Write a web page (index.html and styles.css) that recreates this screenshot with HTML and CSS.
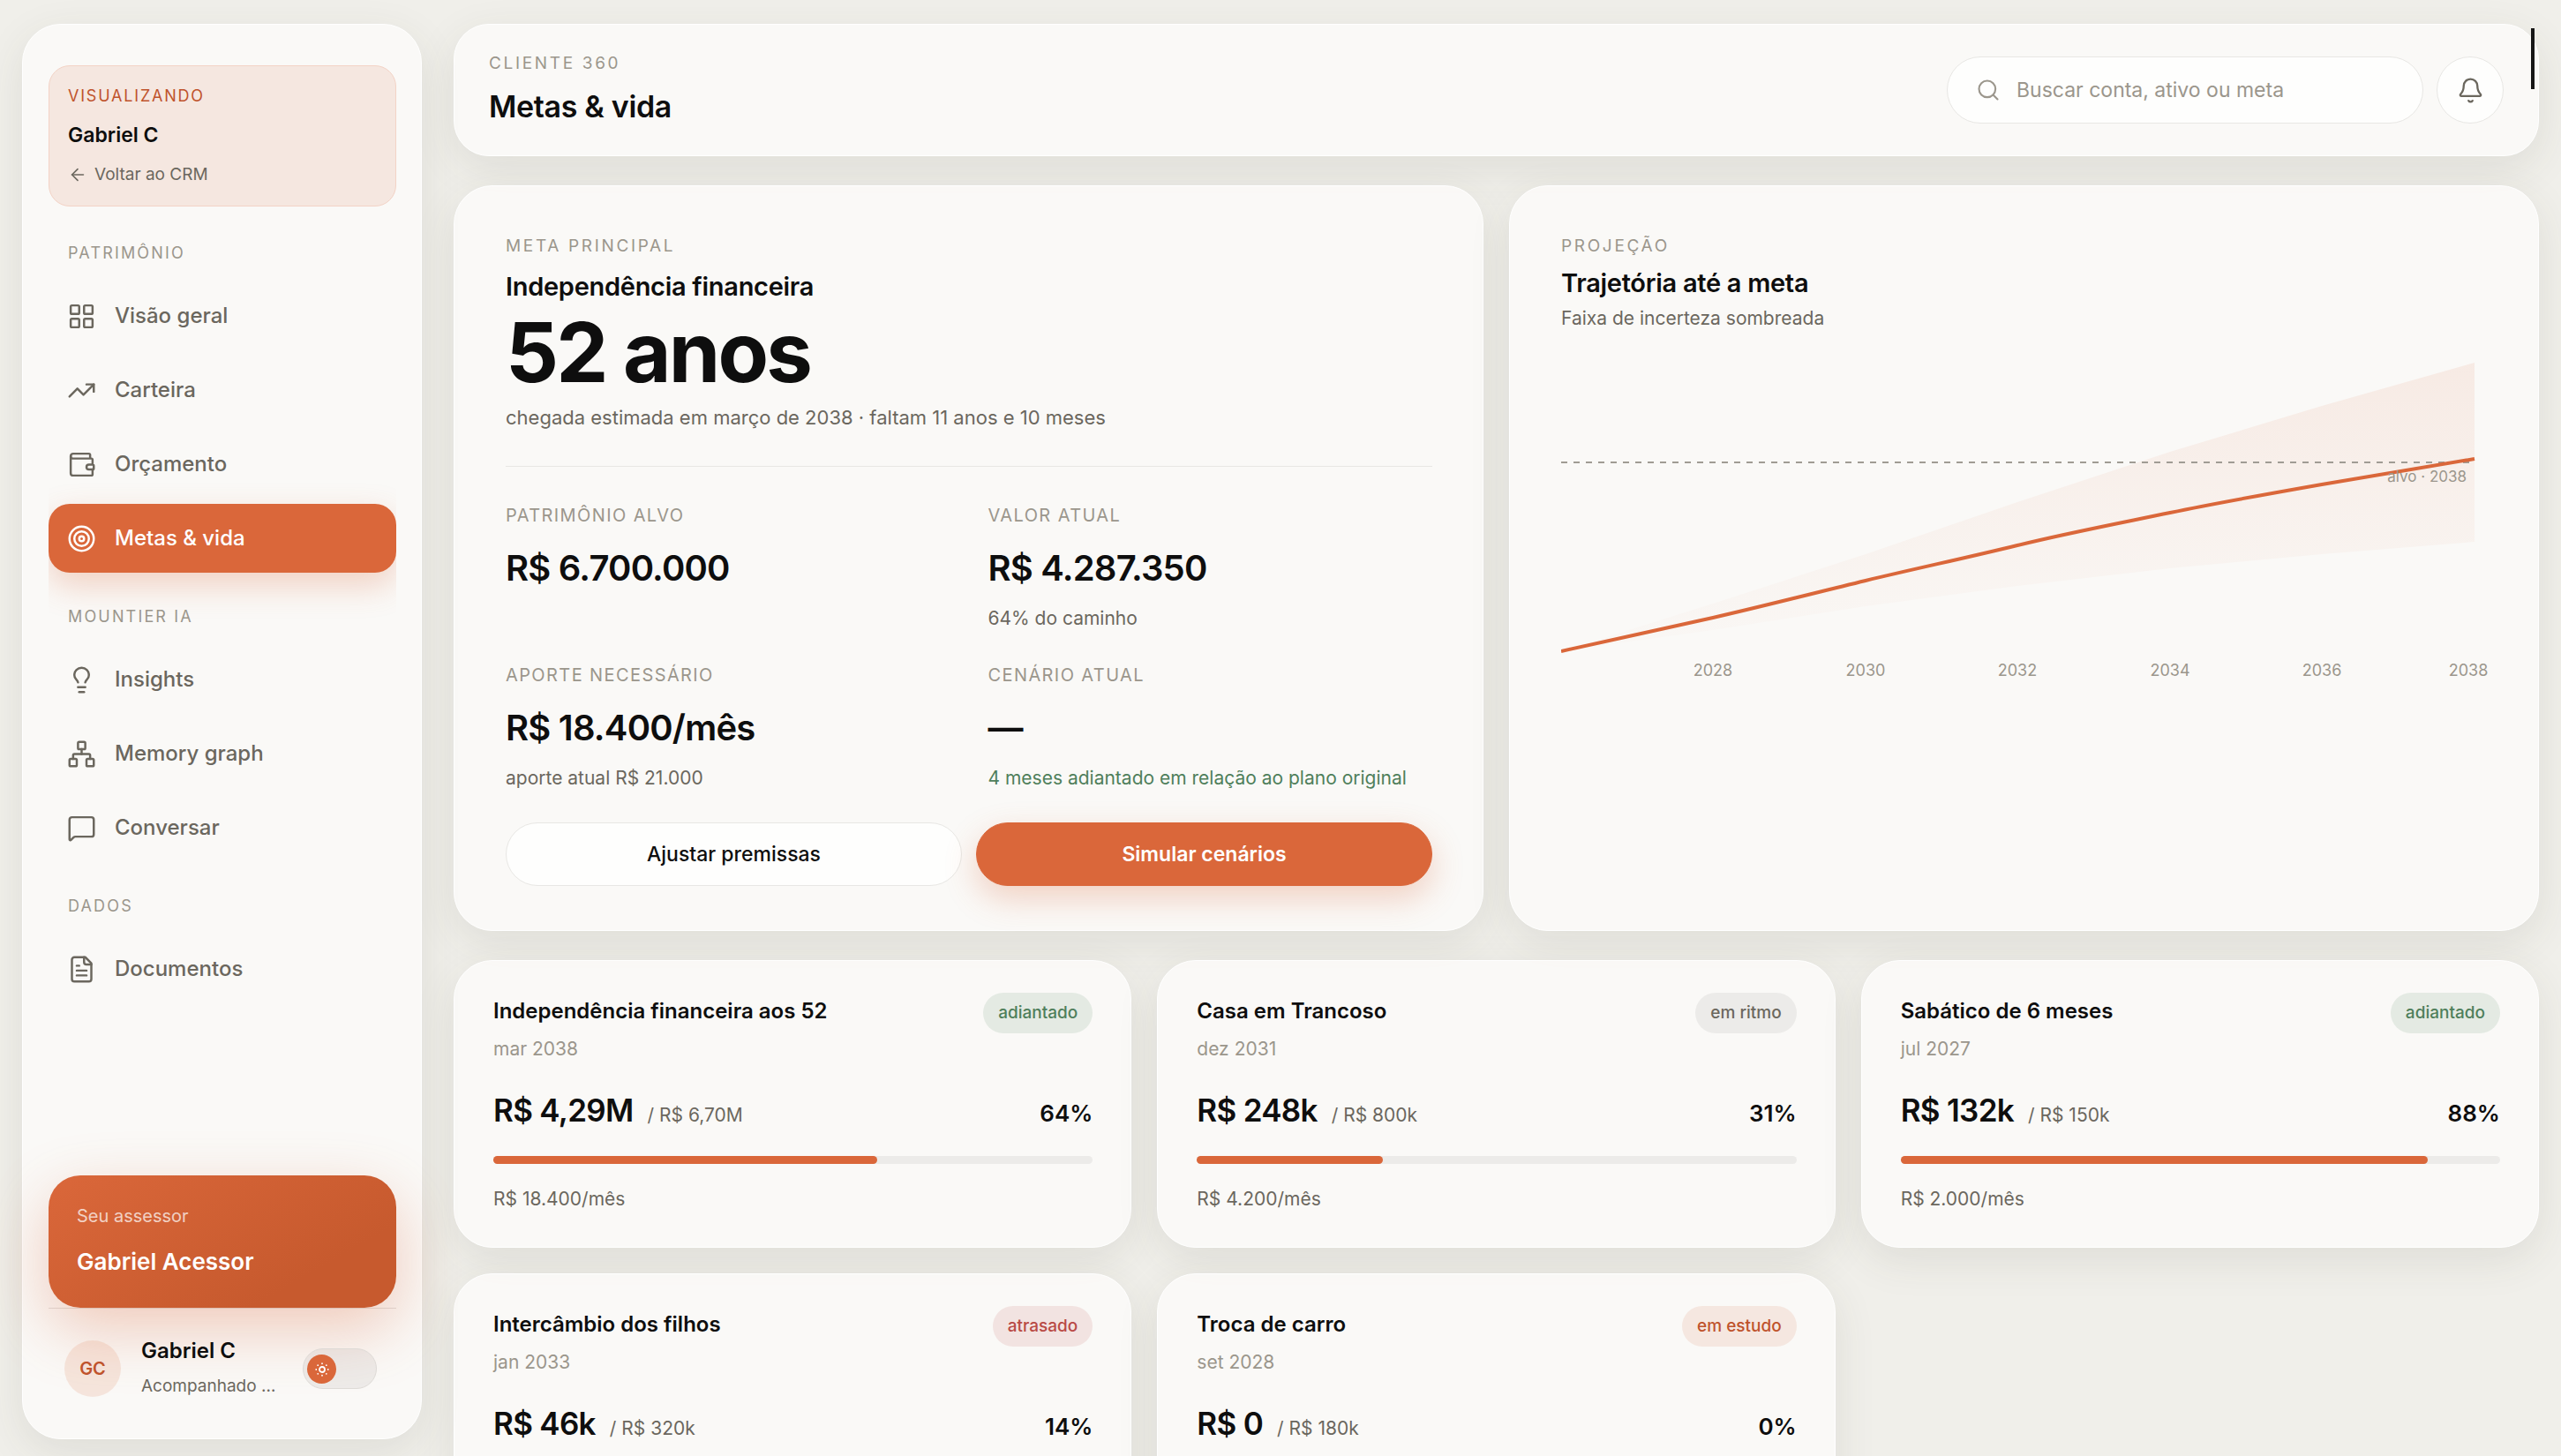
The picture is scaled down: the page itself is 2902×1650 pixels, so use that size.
FILE: index.html
```html
<!DOCTYPE html>
<html lang="pt-BR">
<head>
    <meta charset="UTF-8">
    <meta name="viewport" content="width=device-width, initial-scale=1.0">
    <title>Metas &amp; vida</title>
    <link rel="stylesheet" href="styles.css">
</head>
<body>
    <div class="app">
        <aside class="sidebar">
            <div class="viewing">
                <span class="viewing-label">Visualizando</span>
                <strong class="viewing-name">Gabriel C</strong>
                <a class="viewing-back" href="#">
                    <svg class="icon icon-xs" viewBox="0 0 24 24"><path d="m12 19-7-7 7-7"/><path d="M19 12H5"/></svg>
                    Voltar ao CRM
                </a>
            </div>

            <nav class="nav">
                <h2 class="nav-title">Patrimônio</h2>
                <ul class="nav-list">
                    <li><a class="nav-item" href="#">
                        <svg class="icon" viewBox="0 0 24 24"><rect x="3" y="3" width="7" height="7" rx="1"/><rect x="14" y="3" width="7" height="7" rx="1"/><rect x="14" y="14" width="7" height="7" rx="1"/><rect x="3" y="14" width="7" height="7" rx="1"/></svg>
                        Visão geral</a></li>
                    <li><a class="nav-item" href="#">
                        <svg class="icon" viewBox="0 0 24 24"><path d="M16 7h6v6"/><path d="m22 7-8.5 8.5-5-5L2 17"/></svg>
                        Carteira</a></li>
                    <li><a class="nav-item" href="#">
                        <svg class="icon" viewBox="0 0 24 24"><path d="M19 7V4a1 1 0 0 0-1-1H5a2 2 0 0 0 0 4h15a1 1 0 0 1 1 1v4h-3a2 2 0 0 0 0 4h3a1 1 0 0 0 1-1v-2a1 1 0 0 0-1-1"/><path d="M3 5v14a2 2 0 0 0 2 2h15a1 1 0 0 0 1-1v-4"/></svg>
                        Orçamento</a></li>
                    <li><a class="nav-item active" href="#" aria-current="page">
                        <svg class="icon" viewBox="0 0 24 24"><circle cx="12" cy="12" r="10"/><circle cx="12" cy="12" r="6"/><circle cx="12" cy="12" r="2"/></svg>
                        Metas &amp; vida</a></li>
                </ul>
                <h2 class="nav-title">Mountier IA</h2>
                <ul class="nav-list">
                    <li><a class="nav-item" href="#">
                        <svg class="icon" viewBox="0 0 24 24"><path d="M15 14c.2-1 .7-1.7 1.5-2.5 1-.9 1.5-2.2 1.5-3.5A6 6 0 0 0 6 8c0 1 .2 2.2 1.5 3.5.7.7 1.3 1.5 1.5 2.5"/><path d="M9 18h6"/><path d="M10 22h4"/></svg>
                        Insights</a></li>
                    <li><a class="nav-item" href="#">
                        <svg class="icon" viewBox="0 0 24 24"><rect x="16" y="16" width="6" height="6" rx="1"/><rect x="2" y="16" width="6" height="6" rx="1"/><rect x="9" y="2" width="6" height="6" rx="1"/><path d="M5 16v-3a1 1 0 0 1 1-1h12a1 1 0 0 1 1 1v3"/><path d="M12 12V8"/></svg>
                        Memory graph</a></li>
                    <li><a class="nav-item" href="#">
                        <svg class="icon" viewBox="0 0 24 24"><path d="M22 17a2 2 0 0 1-2 2H6.828a2 2 0 0 0-1.414.586l-2.202 2.202A.71.71 0 0 1 2 21.286V5a2 2 0 0 1 2-2h16a2 2 0 0 1 2 2z"/></svg>
                        Conversar</a></li>
                </ul>
                <h2 class="nav-title">Dados</h2>
                <ul class="nav-list">
                    <li><a class="nav-item" href="#">
                        <svg class="icon" viewBox="0 0 24 24"><path d="M15 2H6a2 2 0 0 0-2 2v16a2 2 0 0 0 2 2h12a2 2 0 0 0 2-2V7Z"/><path d="M14 2v4a2 2 0 0 0 2 2h4"/><path d="M10 9H8"/><path d="M16 13H8"/><path d="M16 17H8"/></svg>
                        Documentos</a></li>
                </ul>
            </nav>

            <div class="advisor">
                <span class="advisor-label">Seu assessor</span>
                <strong class="advisor-name">Gabriel Acessor</strong>
            </div>

            <div class="user">
                <span class="avatar">GC</span>
                <div class="user-info">
                    <strong class="user-name">Gabriel C</strong>
                    <span class="user-role">Acompanhado …</span>
                </div>
                <label class="theme-switch">
                    <input type="checkbox" aria-label="Tema">
                    <span class="knob">
                        <svg class="icon" viewBox="0 0 24 24"><circle cx="12" cy="12" r="4"/><path d="M12 3v.01M12 21v.01M3 12h.01M21 12h.01M18.4 5.6h.01M5.6 18.4h.01M18.4 18.4h.01M5.6 5.6h.01"/></svg>
                    </span>
                </label>
            </div>
        </aside>

        <main class="content">
            <header class="topbar">
                <div>
                    <p class="eyebrow">Cliente 360</p>
                    <h1 class="page-title">Metas &amp; vida</h1>
                </div>
                <div class="topbar-actions">
                    <label class="search">
                        <svg class="icon icon-sm" viewBox="0 0 24 24"><circle cx="11" cy="11" r="8"/><path d="m21 21-4.3-4.3"/></svg>
                        <input type="text" placeholder="Buscar conta, ativo ou meta" aria-label="Buscar">
                    </label>
                    <button class="bell" type="button" aria-label="Notificações">
                        <svg class="icon" viewBox="0 0 24 24"><path d="M10.268 21a2 2 0 0 0 3.464 0"/><path d="M3.262 15.326A1 1 0 0 0 4 17h16a1 1 0 0 0 .74-1.673C19.41 13.956 18 12.499 18 8A6 6 0 0 0 6 8c0 4.499-1.411 5.956-2.738 7.326"/></svg>
                    </button>
                </div>
            </header>

            <section class="overview">
                <article class="card main-goal">
                    <p class="eyebrow">Meta principal</p>
                    <h2 class="goal-title">Independência financeira</h2>
                    <p class="goal-age">52 anos</p>
                    <p class="goal-eta">chegada estimada em março de 2038 · faltam 11 anos e 10 meses</p>
                    <dl class="stats">
                        <div class="stat">
                            <dt>Patrimônio alvo</dt>
                            <dd>R$ 6.700.000</dd>
                        </div>
                        <div class="stat">
                            <dt>Valor atual</dt>
                            <dd>R$ 4.287.350</dd>
                            <dd class="hint">64% do caminho</dd>
                        </div>
                        <div class="stat">
                            <dt>Aporte necessário</dt>
                            <dd>R$ 18.400/mês</dd>
                            <dd class="hint">aporte atual R$ 21.000</dd>
                        </div>
                        <div class="stat">
                            <dt>Cenário atual</dt>
                            <dd>—</dd>
                            <dd class="hint positive">4 meses adiantado em relação ao plano original</dd>
                        </div>
                    </dl>
                    <div class="actions">
                        <button class="btn" type="button">Ajustar premissas</button>
                        <button class="btn btn-primary" type="button">Simular cenários</button>
                    </div>
                </article>

                <article class="card projection">
                    <p class="eyebrow">Projeção</p>
                    <h2 class="projection-title">Trajetória até a meta</h2>
                    <p class="projection-sub">Faixa de incerteza sombreada</p>
                    <svg class="chart" viewBox="0 0 1050 380" role="img" aria-label="Trajetória até a meta">
                        <defs>
                            <linearGradient id="band" x1="0" y1="0" x2="0" y2="1">
                                <stop offset="0" stop-color="#DA673A" stop-opacity=".1"/>
                                <stop offset="1" stop-color="#DA673A" stop-opacity=".01"/>
                            </linearGradient>
                        </defs>
                        <path fill="url(#band)" d="M0 338 172 284 345 228 517 169 690 112 862 60 1035 11V214L862 228 690 244 517 264 345 287 172 314Z"/>
                        <path class="target" d="M0 124H1035"/>
                        <path class="line" d="M0 338 C57 325 115 313 172 300 S287 272 345 258 S460 232 517 218 S632 193 690 181 S805 159 862 149 S977 130 1035 120"/>
                        <text class="target-label" x="1026" y="146">alvo · 2038</text>
                        <g class="years">
                            <text x="172" y="366">2028</text>
                            <text x="345" y="366">2030</text>
                            <text x="517" y="366">2032</text>
                            <text x="690" y="366">2034</text>
                            <text x="862" y="366">2036</text>
                            <text x="1028" y="366">2038</text>
                        </g>
                    </svg>
                </article>
            </section>

            <section class="goals">
                <article class="card goal">
                    <div class="goal-head">
                        <div>
                            <h3>Independência financeira aos 52</h3>
                            <p class="goal-date">mar 2038</p>
                        </div>
                        <span class="badge ahead">adiantado</span>
                    </div>
                    <div class="goal-values">
                        <strong class="amount">R$ 4,29M</strong>
                        <span class="total">/ R$ 6,70M</span>
                        <strong class="percent">64%</strong>
                    </div>
                    <div class="track"><div class="fill" style="width: 64%"></div></div>
                    <p class="goal-monthly">R$ 18.400/mês</p>
                </article>

                <article class="card goal">
                    <div class="goal-head">
                        <div>
                            <h3>Casa em Trancoso</h3>
                            <p class="goal-date">dez 2031</p>
                        </div>
                        <span class="badge">em ritmo</span>
                    </div>
                    <div class="goal-values">
                        <strong class="amount">R$ 248k</strong>
                        <span class="total">/ R$ 800k</span>
                        <strong class="percent">31%</strong>
                    </div>
                    <div class="track"><div class="fill" style="width: 31%"></div></div>
                    <p class="goal-monthly">R$ 4.200/mês</p>
                </article>

                <article class="card goal">
                    <div class="goal-head">
                        <div>
                            <h3>Sabático de 6 meses</h3>
                            <p class="goal-date">jul 2027</p>
                        </div>
                        <span class="badge ahead">adiantado</span>
                    </div>
                    <div class="goal-values">
                        <strong class="amount">R$ 132k</strong>
                        <span class="total">/ R$ 150k</span>
                        <strong class="percent">88%</strong>
                    </div>
                    <div class="track"><div class="fill" style="width: 88%"></div></div>
                    <p class="goal-monthly">R$ 2.000/mês</p>
                </article>

                <article class="card goal">
                    <div class="goal-head">
                        <div>
                            <h3>Intercâmbio dos filhos</h3>
                            <p class="goal-date">jan 2033</p>
                        </div>
                        <span class="badge late">atrasado</span>
                    </div>
                    <div class="goal-values">
                        <strong class="amount">R$ 46k</strong>
                        <span class="total">/ R$ 320k</span>
                        <strong class="percent">14%</strong>
                    </div>
                    <div class="track"><div class="fill" style="width: 14%"></div></div>
                </article>

                <article class="card goal">
                    <div class="goal-head">
                        <div>
                            <h3>Troca de carro</h3>
                            <p class="goal-date">set 2028</p>
                        </div>
                        <span class="badge study">em estudo</span>
                    </div>
                    <div class="goal-values">
                        <strong class="amount">R$ 0</strong>
                        <span class="total">/ R$ 180k</span>
                        <strong class="percent">0%</strong>
                    </div>
                    <div class="track"><div class="fill" style="width: 0%"></div></div>
                </article>
            </section>
        </main>
    </div>
    <div class="scroll-thumb"></div>
</body>
</html>
```
FILE: styles.css
```css
:root {
    --bg: #f0efea;
    --panel: rgba(252, 251, 250, 0.8);
    --white: #fefefd;
    --ink: #0e0e0e;
    --muted: #6b675e;
    --soft: #9b968c;
    --line: #e8e7e4;
    --track: #ecebe9;
    --accent: #da673a;
    --accent-dark: #c75a2e;
    --accent-ink: #bf532c;
    --accent-soft: #f5e7e0;
    --green: #4f7f5b;
    --red: #b94a45;
    --shadow: 0 14px 48px rgba(70, 66, 50, 0.1);
    --glow: 0 14px 36px rgba(218, 103, 58, 0.28);
}
* {
    box-sizing: border-box;
    margin: 0;
    padding: 0;
}
html {
    scrollbar-width: none;
}
body {
    font-family: Inter, 'Liberation Sans', sans-serif;
    font-size: 21px;
    line-height: 30px;
    background: var(--bg);
    color: var(--ink);
}
ul {
    list-style: none;
}
a {
    color: inherit;
    text-decoration: none;
}
button, input {
    font: inherit;
    color: inherit;
}
.app {
    display: flex;
    align-items: flex-start;
    gap: 36px;
    padding: 27px 25px;
}
.icon {
    width: 33px;
    height: 33px;
    flex: none;
    fill: none;
    stroke: currentColor;
    stroke-width: 1.8;
    stroke-linecap: round;
    stroke-linejoin: round;
}
.icon-sm {
    width: 28px;
    height: 28px;
}
.icon-xs {
    width: 22px;
    height: 22px;
}

/* Sidebar */
.sidebar {
    position: sticky;
    top: 27px;
    width: 453px;
    height: calc(100vh - 46px);
    flex: none;
    display: flex;
    flex-direction: column;
    padding: 46px 28px 44px 29px;
    background: var(--panel);
    border: 1px solid #fff;
    border-radius: 44px;
    box-shadow: var(--shadow);
}
.viewing {
    display: flex;
    flex-direction: column;
    padding: 23px 21px 20px;
    background: var(--accent-soft);
    border: 1px solid #f3d3c6;
    border-radius: 24px;
}
.viewing-label, .nav-title {
    font-size: 18px;
    line-height: 22px;
    font-weight: 400;
    letter-spacing: 0.12em;
    text-transform: uppercase;
}
.viewing-label {
    color: var(--accent-ink);
    letter-spacing: 0.1em;
}
.viewing-name {
    margin-top: 18px;
    font-size: 23px;
    line-height: 30px;
    font-weight: 600;
}
.viewing-back {
    display: flex;
    align-items: center;
    gap: 8px;
    margin-top: 15px;
    font-size: 19px;
    color: var(--muted);
}
.nav {
    flex: 1;
    overflow: hidden;
    color: var(--muted);
}
.nav-title {
    margin: 39px 0 21px;
    padding-left: 22px;
    color: var(--soft);
}
.nav-title:first-child {
    margin-top: 42px;
}
.nav-list {
    display: grid;
    gap: 6px;
}
.nav-item {
    display: flex;
    align-items: center;
    gap: 21px;
    height: 78px;
    padding: 0 21px;
    border-radius: 24px;
    font-size: 24px;
    font-weight: 500;
}
.nav-item.active {
    background: var(--accent);
    color: #fff;
    box-shadow: var(--glow);
}
.advisor {
    display: flex;
    flex-direction: column;
    gap: 20px;
    padding: 31px 32px 35px;
    border-radius: 36px;
    background: linear-gradient(150deg, var(--accent), var(--accent-dark) 75%);
    color: #fff;
    box-shadow: 0 24px 70px rgba(218, 103, 58, 0.32);
}
.advisor-label {
    font-size: 20px;
    opacity: 0.7;
}
.advisor-name {
    font-size: 26px;
    line-height: 34px;
    font-weight: 600;
}
.user {
    display: flex;
    align-items: center;
    gap: 23px;
    padding: 33px 22px 0 18px;
    border-top: 1px solid rgba(90, 60, 40, 0.14);
    z-index: 1;
}
.avatar {
    display: grid;
    place-items: center;
    width: 64px;
    height: 64px;
    flex: none;
    border-radius: 50%;
    background: rgba(218, 103, 58, 0.14);
    color: var(--accent-ink);
    font-size: 20px;
    font-weight: 600;
}
.user-info {
    flex: 1;
    display: flex;
    flex-direction: column;
    gap: 10px;
    white-space: nowrap;
}
.user-name {
    font-size: 24px;
    font-weight: 600;
}
.user-role {
    font-size: 19px;
    color: var(--muted);
}
.theme-switch {
    position: relative;
    display: flex;
}
.theme-switch input {
    appearance: none;
    width: 84px;
    height: 46px;
    border: 1px solid #dedad6;
    border-radius: 23px;
    background: rgba(30, 25, 20, 0.06);
}
.knob {
    position: absolute;
    top: 7px;
    left: 5px;
    display: grid;
    place-items: center;
    width: 33px;
    height: 33px;
    border-radius: 50%;
    background: var(--accent);
    color: #fff;
}
.knob .icon {
    width: 18px;
    height: 18px;
    stroke-width: 2.4;
}

/* Top bar */
.content {
    flex: 1;
    min-width: 0;
    display: grid;
    gap: 33px;
}
.topbar, .card {
    background: var(--panel);
    border: 1px solid #fff;
    border-radius: 44px;
    box-shadow: var(--shadow);
}
.topbar {
    display: flex;
    align-items: center;
    justify-content: space-between;
    padding: 33px 39px;
    border-radius: 40px;
}
.eyebrow {
    font-size: 19px;
    line-height: 22px;
    letter-spacing: 0.14em;
    text-transform: uppercase;
    color: var(--soft);
}
.page-title {
    margin-top: 16px;
    font-size: 34px;
    line-height: 44px;
    font-weight: 600;
    letter-spacing: -0.01em;
}
.topbar-actions {
    display: flex;
    gap: 15px;
}
.search {
    display: flex;
    align-items: center;
    gap: 18px;
    width: 540px;
    height: 76px;
    padding: 0 32px;
    background: var(--white);
    border: 1px solid var(--line);
    border-radius: 38px;
    color: var(--soft);
    font-size: 23px;
}
.search input {
    flex: 1;
    min-width: 0;
    border: none;
    outline: none;
    background: none;
}
.search input::placeholder {
    color: var(--soft);
    opacity: 1;
}
.bell {
    display: grid;
    place-items: center;
    width: 76px;
    height: 76px;
    background: var(--white);
    border: 1px solid var(--line);
    border-radius: 50%;
    color: var(--muted);
    cursor: pointer;
}
.bell .icon {
    width: 31px;
    height: 31px;
}

/* Main goal + projection */
.overview {
    display: grid;
    grid-template-columns: 1fr 1fr;
    gap: 29px;
}
.main-goal, .projection {
    padding: 57px 57px 50px 58px;
}
.goal-title {
    margin-top: 17px;
    font-size: 29px;
    line-height: 36px;
    font-weight: 600;
    letter-spacing: -0.01em;
}
.goal-age {
    margin-top: 9px;
    font-size: 94px;
    line-height: 94px;
    font-weight: 700;
    letter-spacing: -0.03em;
}
.goal-eta {
    margin-top: 11px;
    padding-bottom: 39px;
    border-bottom: 1px solid var(--line);
    font-size: 22px;
    line-height: 32px;
    color: var(--muted);
}
.stats {
    display: grid;
    grid-template-columns: 1fr 1fr;
    gap: 36px 43px;
    margin-top: 42px;
}
.stat dt {
    font-size: 20px;
    line-height: 26px;
    letter-spacing: 0.07em;
    text-transform: uppercase;
    color: var(--soft);
}
.stat dd {
    margin-top: 23px;
    font-size: 40px;
    line-height: 48px;
    font-weight: 600;
    letter-spacing: -0.02em;
}
.stat .hint {
    margin-top: 18px;
    font-size: 21px;
    line-height: 30px;
    font-weight: 400;
    letter-spacing: 0;
    color: var(--muted);
}
.stat .positive {
    color: var(--green);
}
.actions {
    display: grid;
    grid-template-columns: 1fr 1fr;
    gap: 16px;
    margin-top: 35px;
}
.btn {
    height: 72px;
    border: 1px solid var(--line);
    border-radius: 36px;
    background: var(--white);
    font-size: 23px;
    font-weight: 500;
    cursor: pointer;
}
.btn-primary {
    border-color: var(--accent);
    background: var(--accent);
    color: #fff;
    font-weight: 600;
    box-shadow: var(--glow);
}
.projection-title {
    margin-top: 13px;
    font-size: 29px;
    line-height: 36px;
    font-weight: 600;
    letter-spacing: -0.01em;
}
.projection-sub {
    margin-top: 7px;
    color: var(--muted);
}
.chart {
    display: block;
    width: 100%;
    margin-top: 24px;
}
.chart .target {
    stroke: #a09c94;
    stroke-width: 2;
    stroke-dasharray: 7 7;
}
.chart .line {
    fill: none;
    stroke: var(--accent);
    stroke-width: 4;
}
.chart text {
    font-size: 18px;
    fill: var(--soft);
}
.chart .target-label {
    font-size: 17px;
    text-anchor: end;
}
.years {
    text-anchor: middle;
}

/* Goal cards */
.goals {
    display: grid;
    grid-template-columns: repeat(3, 1fr);
    gap: 29px;
}
.goal {
    min-height: 326px;
    padding: 36px 43px 38px 44px;
}
.goal-head {
    display: flex;
    justify-content: space-between;
    align-items: flex-start;
}
.goal h3 {
    margin-top: 5px;
    font-size: 24px;
    line-height: 32px;
    font-weight: 600;
}
.goal-date {
    margin-top: 12px;
    color: var(--soft);
}
.badge {
    padding: 8px 17px;
    border-radius: 24px;
    background: var(--track);
    color: var(--muted);
    font-size: 19px;
    font-weight: 500;
}
.badge.ahead {
    background: #e4eae3;
    color: var(--green);
}
.badge.late {
    background: #f2e3e1;
    color: var(--red);
}
.badge.study {
    background: var(--accent-soft);
    color: var(--accent-ink);
}
.goal-values {
    display: flex;
    align-items: baseline;
    gap: 16px;
    margin-top: 32px;
}
.amount {
    font-size: 35px;
    line-height: 44px;
    font-weight: 600;
    letter-spacing: -0.02em;
}
.total {
    color: var(--muted);
}
.percent {
    margin-left: auto;
    font-size: 26px;
    font-weight: 600;
}
.track {
    margin-top: 30px;
    height: 9px;
    border-radius: 5px;
    background: var(--track);
}
.fill {
    height: 100%;
    border-radius: 5px;
    background: var(--accent);
}
.goal-monthly {
    margin-top: 25px;
    color: var(--muted);
}

.scroll-thumb {
    position: fixed;
    top: 32px;
    right: 30px;
    width: 4px;
    height: 69px;
    background: #161616;
}
```
